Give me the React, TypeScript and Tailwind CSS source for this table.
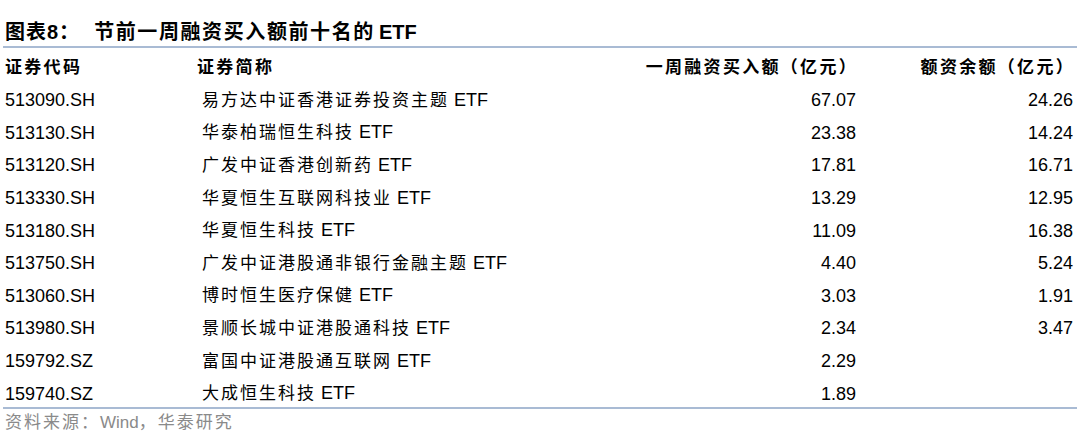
import React from "react";

const rows: [string, string, string, string][] = [
  ["513090.SH", "易方达中证香港证券投资主题", "67.07", "24.26"],
  ["513130.SH", "华泰柏瑞恒生科技", "23.38", "14.24"],
  ["513120.SH", "广发中证香港创新药", "17.81", "16.71"],
  ["513330.SH", "华夏恒生互联网科技业", "13.29", "12.95"],
  ["513180.SH", "华夏恒生科技", "11.09", "16.38"],
  ["513750.SH", "广发中证港股通非银行金融主题", "4.40", "5.24"],
  ["513060.SH", "博时恒生医疗保健", "3.03", "1.91"],
  ["513980.SH", "景顺长城中证港股通科技", "2.34", "3.47"],
  ["159792.SZ", "富国中证港股通互联网", "2.29", ""],
  ["159740.SZ", "大成恒生科技", "1.89", ""],
];

const font = { fontFamily: '"Liberation Sans", "Noto Sans CJK SC", sans-serif' };

export default function App() {
  return (
    <div className="w-[1080px] h-[440px] bg-white text-black overflow-hidden" style={font}>
      <div className="h-[46px] flex items-end pb-[2px] pl-[5px] text-[20px] font-bold leading-[24px]">
        <span className="tracking-[1px]">图表8：</span>
        <span className="ml-[14px] tracking-[1.6px]">节前一周融资买入额前十名的</span>
        <span className="ml-[4px]">ETF</span>
      </div>
      <div className="mx-[3px] h-[2px] bg-[#a9bbd4]" />
      <div className="pl-[5px] pr-[7px]">
        <div className="grid grid-cols-[192px_439px_220px_217px] h-[36px] items-center pt-[4px] text-[17px] font-bold tracking-[2.3px] leading-[20px] whitespace-nowrap">
          <div>证券代码</div>
          <div>证券简称</div>
          <div className="text-right -mr-[2px]">一周融资买入额（亿元）</div>
          <div className="text-right -mr-[2px]">额资余额（亿元）</div>
        </div>
        {rows.map((r) => (
          <div
            key={r[0]}
            className="grid grid-cols-[192px_459px_200px_217px] h-[32.6px] items-center text-[18px] leading-[20px] whitespace-nowrap"
          >
            <div>{r[0]}</div>
            <div className="pl-[5px]">
              <span className="text-[17px] tracking-[2px]">{r[1]}</span>
              <span> ETF</span>
            </div>
            <div className="text-right">{r[2]}</div>
            <div className="text-right">{r[3]}</div>
          </div>
        ))}
      </div>
      <div className="-mt-[3px] mx-[3px] h-[2px] bg-[#a9bbd4]" />
      <div className="pl-[5px] pt-[4px] text-[17px] leading-[20px] text-[#8a8a8a]">
        <span className="tracking-[2px]">资料来源：</span>
        <span>Wind</span>
        <span className="tracking-[2px]">，华泰研究</span>
      </div>
    </div>
  );
}
